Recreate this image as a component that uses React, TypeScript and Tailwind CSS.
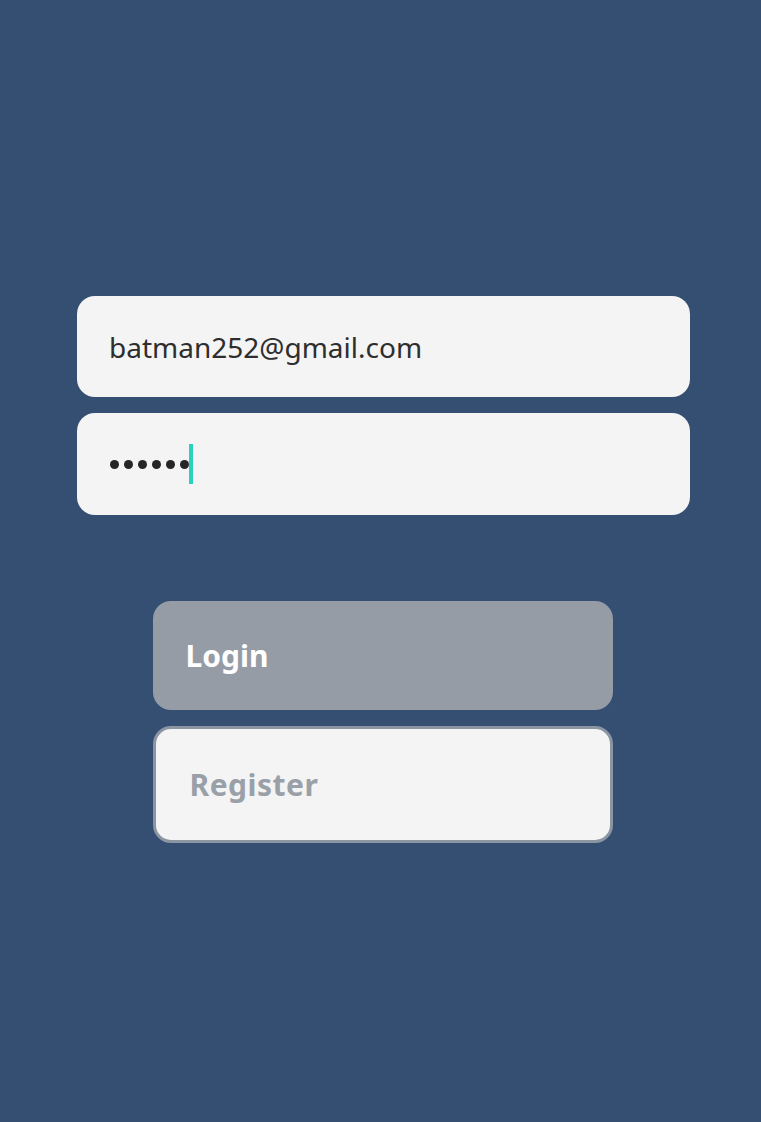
export default function App() {
  return (
    <div
      className="w-[761px] h-[1122px] bg-[#344f72] flex flex-col items-center pt-[296px] pl-[6px]"
      style={{ fontFamily: '"Noto Sans", "Open Sans", sans-serif' }}
    >
      <div className="w-[613px] flex flex-col gap-[16px]">
        <div className="h-[101px] rounded-[18px] bg-[#f4f4f4] flex items-center pl-[32px]">
          <span className="text-[28px] text-[#2e2e2e]">batman252@gmail.com</span>
        </div>
        <div className="h-[102px] rounded-[18px] bg-[#f4f4f4] flex items-center pl-[33px]">
          <div className="flex items-center gap-[5px]">
            {[0, 1, 2, 3, 4, 5].map((i) => (
              <span key={i} className="w-[9px] h-[9px] rounded-full bg-[#262626]" />
            ))}
          </div>
          <span className="w-[4px] h-[40px] bg-[#2ad1c0]" />
        </div>
      </div>
      <div className="w-[460px] mt-[86px] mr-[2px] flex flex-col gap-[16px]">
        <div className="h-[109px] rounded-[18px] bg-[#969ca6] flex items-center pl-[33px]">
          <span className="text-[30px] font-bold text-white">Login</span>
        </div>
        <div className="h-[117px] rounded-[18px] bg-[#f4f4f4] border-[3px] border-[#8c95a2] flex items-center pl-[34px]">
          <span className="text-[30px] font-bold text-[#9aa0a8] tracking-[0.5px]">Register</span>
        </div>
      </div>
    </div>
  );
}
